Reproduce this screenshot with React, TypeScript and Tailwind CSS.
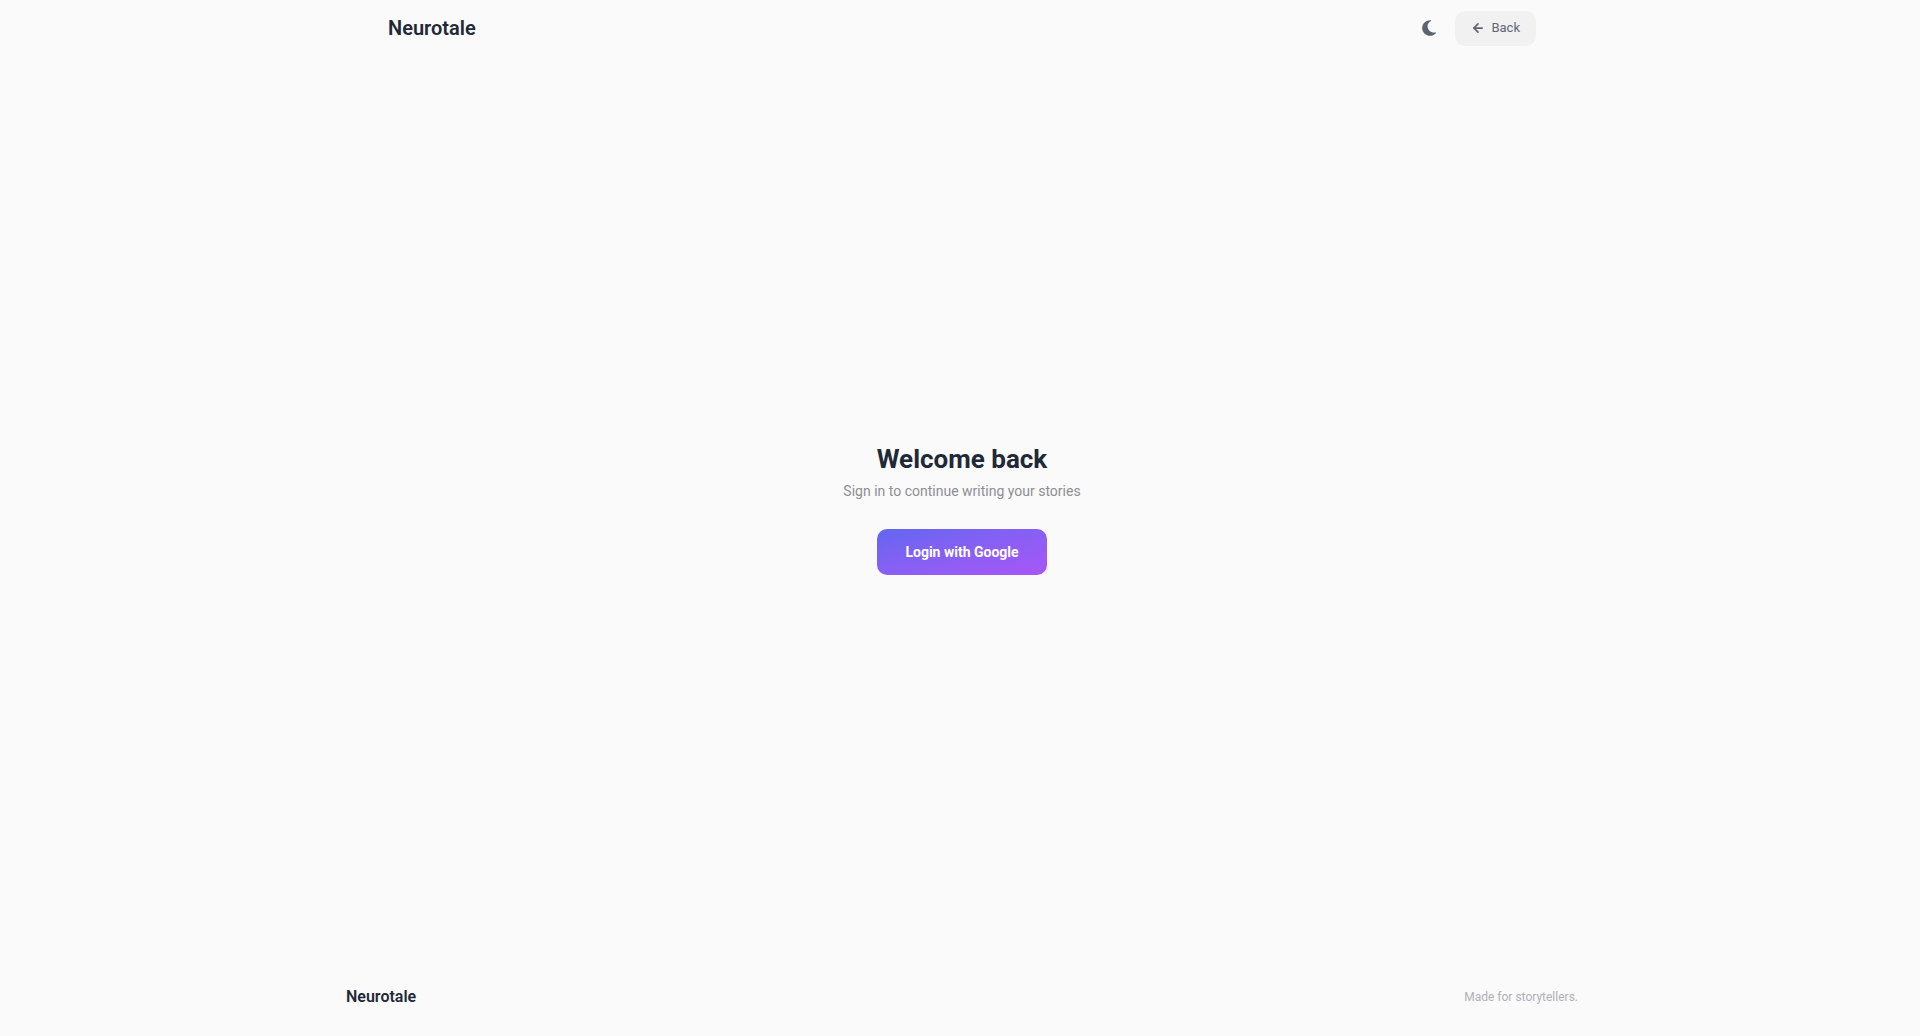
import React from 'react';
import { ArrowLeft } from 'lucide-react';

const MoonIcon: React.FC = () => (
  <svg width="16" height="16" viewBox="0 0 16 16" fill="currentColor" aria-hidden="true">
    <path d="M9.8 0.3A7.8 7.8 0 1 0 14.8 13.2C15.1 12.8 14.9 12.4 14.4 12.5C9.6 13.2 6.2 9.6 6.6 5.6C6.8 3.6 8 2.1 9.9 1C10.3 0.7 10.2 0.3 9.8 0.3Z" />
  </svg>
);

const Header: React.FC = () => (
  <header className="w-full">
    <div className="max-w-[1148px] mx-auto h-14 flex items-center justify-between">
      <a href="/" className="text-xl font-semibold text-[#1f2937]">
        Neurotale
      </a>
      <div className="flex items-center gap-3.5">
        <button type="button" aria-label="Toggle theme" className="p-1 text-[#5b6472]">
          <MoonIcon />
        </button>
        <button
          type="button"
          className="flex items-center gap-1.5 h-[35px] px-4 rounded-[10px] bg-[#f1f1f1] text-[13px] text-[#5f6673]"
        >
          <ArrowLeft size={14} strokeWidth={3} />
          Back
        </button>
      </div>
    </div>
  </header>
);

const Footer: React.FC = () => (
  <footer className="w-full pt-6 pb-[27px]">
    <div className="max-w-[1232px] mx-auto flex items-center justify-between">
      <span className="text-base font-semibold text-[#1f2937]">Neurotale</span>
      <span className="text-xs text-[#b0b0b8]">Made for storytellers.</span>
    </div>
  </footer>
);

const App: React.FC = () => {
  return (
    <div className="min-h-screen pl-1 flex flex-col bg-[#fafafa] font-[Roboto,sans-serif]">
      <Header />
      <main className="flex-1 flex flex-col items-center justify-center">
        <h1 className="text-[26px] leading-8 font-bold text-[#1f2937]">Welcome back</h1>
        <p className="mt-1.5 text-sm text-[#8e8e93]">Sign in to continue writing your stories</p>
        <button
          type="button"
          className="mt-7 px-7 py-3 rounded-[10px] bg-linear-to-br from-[#6366f1] to-[#a855f7] text-sm leading-[22px] font-bold text-white"
        >
          Login with Google
        </button>
      </main>
      <Footer />
    </div>
  );
};

export default App;
